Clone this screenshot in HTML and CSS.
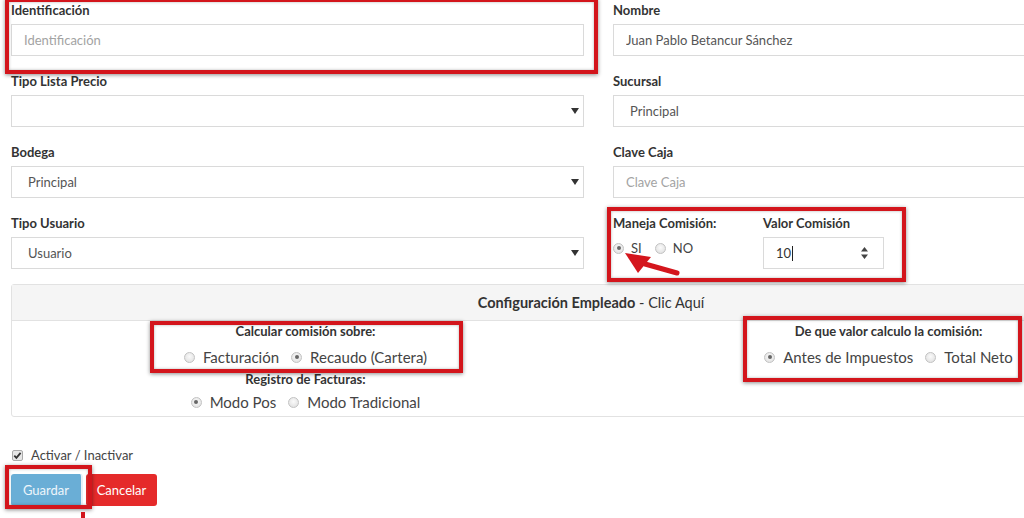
FILE: index.html
```html
<!DOCTYPE html>
<html lang="es">
<head>
<meta charset="utf-8">
<title>Empleado</title>
<link rel="stylesheet" href="styles.css">
</head>
<body>
<div class="page">
  <div class="grid">
    <div class="field">
      <label>Identificación</label>
      <input class="ctl" placeholder="Identificación">
    </div>
    <div class="field">
      <label>Nombre</label>
      <input class="ctl" value="Juan Pablo Betancur Sánchez">
    </div>
    <div class="field">
      <label>Tipo Lista Precio</label>
      <div class="sel"><div class="ctl seltext"></div></div>
    </div>
    <div class="field">
      <label>Sucursal</label>
      <div class="sel"><div class="ctl seltext">Principal</div></div>
    </div>
    <div class="field">
      <label>Bodega</label>
      <div class="sel"><div class="ctl seltext">Principal</div></div>
    </div>
    <div class="field">
      <label>Clave Caja</label>
      <input class="ctl" placeholder="Clave Caja">
    </div>
    <div class="field">
      <label>Tipo Usuario</label>
      <div class="sel"><div class="ctl seltext">Usuario</div></div>
    </div>
    <div class="comision">
      <div class="field">
        <label>Maneja Comisión:</label>
        <div class="radios small">
          <span class="opt"><span class="radio on"></span>SI</span>
          <span class="opt"><span class="radio"></span>NO</span>
        </div>
      </div>
      <div class="field">
        <label>Valor Comisión</label>
        <div class="ctl numbox">
          <span>10<span class="caret"></span></span>
          <svg class="spin" width="9" height="14" viewBox="0 0 9 14"><path d="M4.5 1 L8 5.5 H1 Z M4.5 13 L8 8.5 H1 Z" fill="#444"/></svg>
        </div>
      </div>
    </div>
  </div>

  <div class="panel">
    <div class="panel-head"><b>Configuración Empleado</b> - Clic Aquí</div>
    <div class="panel-body">
      <div class="pcol">
        <div class="plabel">Calcular comisión sobre:</div>
        <div class="radios big">
          <span class="opt"><span class="radio"></span>Facturación</span>
          <span class="opt"><span class="radio on"></span>Recaudo (Cartera)</span>
        </div>
        <div class="plabel second">Registro de Facturas:</div>
        <div class="radios big second">
          <span class="opt"><span class="radio on"></span>Modo Pos</span>
          <span class="opt"><span class="radio"></span>Modo Tradicional</span>
        </div>
      </div>
      <div class="pcol">
        <div class="plabel">De que valor calculo la comisión:</div>
        <div class="radios big">
          <span class="opt"><span class="radio on"></span>Antes de Impuestos</span>
          <span class="opt"><span class="radio"></span>Total Neto</span>
        </div>
      </div>
    </div>
  </div>

  <div class="check">
    <svg width="11" height="11" viewBox="0 0 11 11"><rect x="0.5" y="0.5" width="10" height="10" rx="1.5" fill="#e6e6e6" stroke="#aaa"/><path d="M2.3 5.6 L4.4 7.8 L8.6 2.8" fill="none" stroke="#333" stroke-width="1.8"/></svg>
    <span>Activar / Inactivar</span>
  </div>

  <div class="buttons">
    <button class="btn save">Guardar</button>
    <button class="btn cancel">Cancelar</button>
  </div>
</div>

<div class="mark m1"></div>
<div class="mark m2"></div>
<div class="mark m3"></div>
<div class="mark m4"></div>
<div class="mark m5"></div>
<div class="tick"></div>
<svg class="arrow" width="70" height="34" viewBox="0 0 70 34">
  <path d="M62 28 L30 19" stroke="#d4161d" stroke-width="5" stroke-linecap="round"/>
  <path d="M10 8 L36 12 L23 28 Z" fill="#d4161d"/>
</svg>
</body>
</html>
```

FILE: styles.css
```css
html, body {
  margin: 0;
  overflow: hidden;
  background: #fff;
}
body {
  width: 1024px;
  height: 518px;
  position: relative;
  font-family: Lato, "Noto Sans", sans-serif;
  color: #333;
}
.page {
  width: 1200px;
  padding: 2px 0 0 11px;
}
.grid {
  display: grid;
  grid-template-columns: 573px 573px;
  column-gap: 29px;
  row-gap: 17px;
}
.field {
  display: flex;
  flex-direction: column;
}
.field label {
  font-weight: 700;
  font-size: 13px;
  line-height: 17px;
  margin-bottom: 5px;
}
.ctl {
  box-sizing: border-box;
  width: 100%;
  height: 32px;
  border: 1px solid #dadada;
  background: #fff;
  font-family: inherit;
  font-size: 13px;
  color: #555;
  padding: 0 12px;
  outline: none;
}
.ctl::placeholder { color: #a3a3a3; }
.sel { position: relative; }
.seltext {
  display: flex;
  align-items: center;
  padding-left: 16px;
}
.sel::after {
  content: "";
  position: absolute;
  right: 5px;
  top: 13px;
  border-left: 4px solid transparent;
  border-right: 4px solid transparent;
  border-top: 6px solid #333;
}
.comision {
  display: grid;
  grid-template-columns: 150px 121px;
}
.radios {
  display: flex;
  align-items: center;
}
.radios.small {
  font-size: 13px;
  color: #444;
  margin-top: 2px;
  height: 18px;
}
.radios.small .opt { margin-right: 13px; }
.radios.small .radio { margin-right: 7px; }
.opt {
  display: inline-flex;
  align-items: center;
}
.radio {
  display: inline-block;
  box-sizing: border-box;
  width: 11px;
  height: 11px;
  border-radius: 50%;
  border: 1px solid #c2c2c2;
  background: radial-gradient(circle at 50% 40%, #fafafa, #dcdcdc);
  position: relative;
  flex: none;
}
.radio.on::after {
  content: "";
  position: absolute;
  left: 2.5px;
  top: 2.5px;
  width: 4px;
  height: 4px;
  border-radius: 50%;
  background: #666;
}
.numbox {
  display: flex;
  align-items: center;
  justify-content: space-between;
  padding: 0 14px 0 12px;
  color: #333;
}
.caret {
  display: inline-block;
  width: 1px;
  height: 15px;
  background: #222;
  vertical-align: -3px;
  margin-left: 1px;
}
.panel {
  box-sizing: border-box;
  width: 1160px;
  margin-top: 15px;
  border: 1px solid #e2e2e2;
  border-radius: 3px;
}
.panel-head {
  height: 35px;
  background: #f5f5f5;
  border-bottom: 1px solid #e2e2e2;
  text-align: center;
  font-size: 14.5px;
  line-height: 35px;
  color: #333;
}
.panel-head b { font-weight: 700; }
.panel-body {
  display: grid;
  grid-template-columns: 1fr 1fr;
  padding: 2px 0 0 0;
  height: 93px;
}
.pcol {
  display: flex;
  flex-direction: column;
  align-items: center;
}
.pcol:first-child { padding-left: 8px; }
.pcol:last-child { padding-left: 16px; }
.plabel {
  font-weight: 700;
  font-size: 13px;
  line-height: 16px;
}
.plabel.second { margin-top: 3px; }
.radios.big {
  font-size: 15px;
  line-height: 22px;
  margin-top: 7px;
  color: #444;
}
.radios.big.second { margin-top: 4px; }
.radios.big .opt { margin: 0 6px; }
.radios.big .radio { margin-right: 8px; }
.check {
  display: flex;
  align-items: center;
  margin-top: 30px;
  height: 16px;
  font-size: 13px;
  color: #444;
}
.check svg { margin-right: 8px; margin-left: 1px; }
.buttons {
  display: flex;
  margin-top: 11px;
}
.btn {
  height: 32px;
  border: none;
  border-radius: 3px;
  font-family: inherit;
  font-size: 13px;
  padding: 0;
}
.save {
  width: 72px;
  background: #6aaed6;
  color: #eef6fb;
  border-right: 2px solid #e8f1f7;
}
.cancel {
  width: 71px;
  margin-left: 3px;
  background: #e52a2a;
  color: #fff;
}
.mark {
  position: absolute;
  box-sizing: border-box;
  border: 4px solid #d3151c;
  box-shadow: 0 1px 4px rgba(0,0,0,0.45), inset 0 0 3px rgba(0,0,0,0.3);
}
.m1 { left: 5px; top: -2px; width: 593px; height: 76px; }
.m2 { left: 607px; top: 207px; width: 299px; height: 75px; }
.m3 { left: 150px; top: 321px; width: 313px; height: 52px; }
.m4 { left: 743px; top: 316px; width: 279px; height: 66px; }
.m5 { left: 5px; top: 465px; width: 87px; height: 44px; }
.tick {
  position: absolute;
  left: 81px;
  top: 512px;
  width: 4px;
  height: 6px;
  background: #d3151c;
}
.arrow {
  position: absolute;
  left: 615px;
  top: 245px;
}
```
